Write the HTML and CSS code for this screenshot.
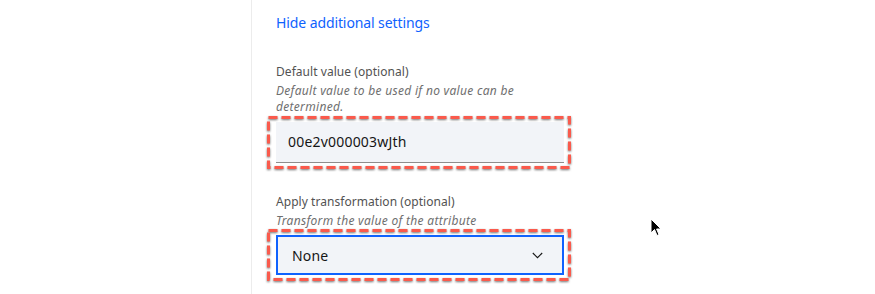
FILE: index.html
```html
<!DOCTYPE html>
<html>
<head>
<meta charset="utf-8">
<link rel="stylesheet" href="styles.css">
</head>
<body>
<div class="page">
  <div class="gutter"></div>
  <div class="panel">
    <a class="link" href="#">Hide additional settings</a>

    <div class="field first">
      <div class="label">Default value (optional)</div>
      <div class="helper">Default value to be used if no value can be determined.</div>
      <div class="control-wrap">
        <div class="text-input">00e2v000003wJth</div>
        <svg class="annot" preserveAspectRatio="none"><rect x="1.5" y="1.5" width="calc(100% - 3px)" height="calc(100% - 3px)"/></svg>
      </div>
    </div>

    <div class="field second">
      <div class="label">Apply transformation (optional)</div>
      <div class="helper">Transform the value of the attribute</div>
      <div class="control-wrap">
        <div class="select">
          <span>None</span>
          <svg class="chev" width="11" height="7" viewBox="0 0 11 7"><path d="M0.8 1 L5.5 5.7 L10.2 1" fill="none" stroke="#161616" stroke-width="1.1"/></svg>
        </div>
        <svg class="annot" preserveAspectRatio="none"><rect x="1.5" y="1.5" width="calc(100% - 3px)" height="calc(100% - 3px)"/></svg>
      </div>
    </div>
  </div>
  <svg class="cursor" width="14" height="20" viewBox="0 0 14 20"><path d="M1 1 L1 15 L4.5 11.5 L7 17.5 L9 16.6 L6.6 11 L11 11 Z" fill="#000" stroke="#fff" stroke-width="1"/></svg>
</div>
</body>
</html>
```
FILE: styles.css
```css
html, body {
  margin: 0;
  padding: 0;
  background: #fff;
}
body {
  font-family: "Noto Sans", "Open Sans", sans-serif;
  color: #161616;
}
.page {
  position: relative;
  width: 875px;
  height: 294px;
  overflow: hidden;
  display: flex;
}
.gutter {
  width: 251px;
  flex: none;
}
.panel {
  border-left: 1px solid #ececec;
  padding-left: 24px;
  width: 288px;
  padding-top: 13px;
  display: flex;
  flex-direction: column;
}
.link {
  color: #0f62fe;
  text-decoration: none;
  font-size: 14px;
  line-height: 20px;
  letter-spacing: -0.1px;
}
.field {
  display: flex;
  flex-direction: column;
}
.field.first {
  margin-top: 31px;
}
.field.second {
  margin-top: 31px;
}
.label {
  font-size: 12px;
  line-height: 16px;
  color: #525252;
  letter-spacing: 0.05px;
}
.helper {
  font-size: 12px;
  line-height: 16px;
  font-style: italic;
  color: #6f6f6f;
  letter-spacing: 0.3px;
  margin-top: 3px;
  padding-right: 40px;
}
.first .control-wrap { margin-top: 7px; }
.second .control-wrap { margin-top: 6px; }
.control-wrap {
  position: relative;
}
.text-input {
  box-sizing: border-box;
  background: #f2f4f8;
  border-bottom: 1px solid #8d8d8d;
  height: 41px;
  padding-left: 12px;
  font-size: 14px;
  line-height: 40px;
  letter-spacing: 0.2px;
}
.select {
  height: 40px;
  box-sizing: border-box;
  background: #f2f4f8;
  border: 2px solid #0f62fe;
  padding: 0 19px 0 14px;
  display: flex;
  align-items: center;
  justify-content: space-between;
  font-size: 14px;
  letter-spacing: 0.2px;
}
.chev {
  display: block;
}
.annot {
  position: absolute;
  left: -9px;
  right: -7px;
  top: -6px;
  bottom: -6px;
  width: calc(100% + 16px);
  height: calc(100% + 12px);
  overflow: visible;
  filter: drop-shadow(0.5px 1.5px 1px rgba(0,0,0,0.55));
}
.annot rect {
  fill: none;
  stroke: #fa5a4c;
  stroke-width: 3;
  stroke-dasharray: 9 4;
}
.cursor {
  position: absolute;
  left: 650px;
  top: 218px;
}
```
